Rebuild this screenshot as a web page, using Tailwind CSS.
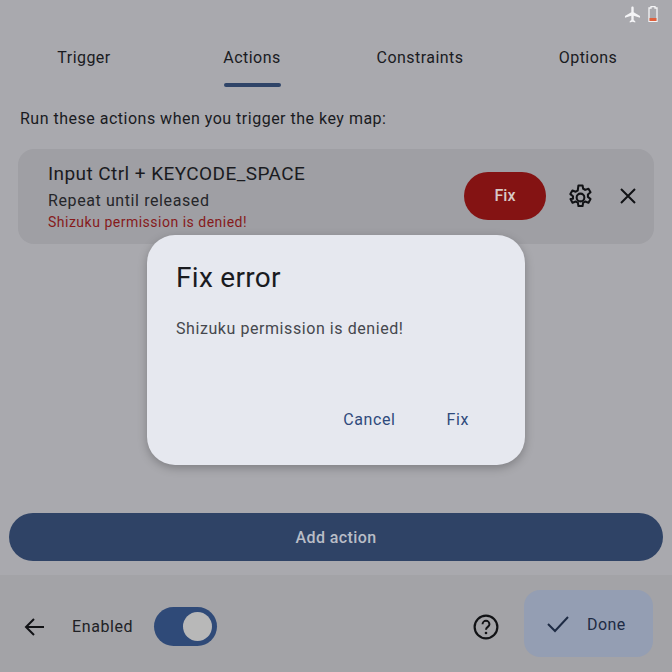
<!DOCTYPE html>
<html><head><meta charset="utf-8"><script src="https://cdn.jsdelivr.net/npm/@tailwindcss/browser@4"></script></head>
<body class="m-0">
<div class="relative w-[672px] h-[672px] overflow-hidden flex flex-col bg-[#a9a9ae] font-['Roboto',sans-serif] text-[#1a1b1f]">
  <div class="h-6 flex items-start justify-end gap-[6px] pt-[5px] pr-[14px] shrink-0">
    <svg class="w-[19px] h-[19px]" viewBox="0 0 24 24" fill="#f4f4f6"><path d="M21 16v-2l-8-5V3.500C13 2.670 12.330 2 11.500 2S10 2.670 10 3.500V9l-8 5v2l8-2.500V19l-2 1.500V22l3.500-1 3.500 1v-1.500L13 19v-5.500z" transform="translate(0.500 0)"/></svg>
    <svg class="w-[10px] h-[16px] mt-[1px]" viewBox="0 0 10 16"><path d="M3 .5h4v1.500h2v13.500H1V2h2z" fill="none" stroke="#f4f4f6" stroke-width="1.300"/><rect x="1.500" y="12" width="7" height="3" fill="#e0603c"/></svg>
  </div>
  <div class="h-[64px] flex shrink-0">
    <div class="flex-1 flex justify-center pt-[24px] text-[16px] leading-[20px] tracking-[0.45px]">Trigger</div>
    <div class="flex-1 flex flex-col items-center pt-[24px] text-[16px] leading-[20px] tracking-[0.45px]"><span>Actions</span><div class="w-[57px] h-[4px] mt-[15px] rounded-full bg-[#2f4468]"></div></div>
    <div class="flex-1 flex justify-center pt-[24px] text-[16px] leading-[20px] tracking-[0.45px]">Constraints</div>
    <div class="flex-1 flex justify-center pt-[24px] text-[16px] leading-[20px] tracking-[0.45px]">Options</div>
  </div>
  <p class="mt-[21px] ml-[20px] text-[16px] leading-[20px] tracking-[0.5px]">Run these actions when you trigger the key map:</p>
  <div class="mt-[20px] mx-[18px] h-[95px] rounded-[16px] bg-[#9f9fa4] flex items-center pl-[30px] pr-[14px] shrink-0">
    <div class="flex-1 flex flex-col">
      <div class="text-[19px] leading-[24px] tracking-[0.43px] -translate-y-[1px]">Input Ctrl + KEYCODE_SPACE</div>
      <div class="mt-[4px] text-[16px] leading-[20px] tracking-[0.6px] text-[#25262a]">Repeat until released</div>
      <div class="mt-[2px] text-[14px] leading-[18px] tracking-[0.5px] text-[#861a1b]">Shizuku permission is denied!</div>
    </div>
    <div class="w-[82px] h-[48px] -mt-[2px] rounded-[24px] bg-[#841313] text-[#d8c9c6] flex items-center justify-center text-[16px] font-medium">Fix</div>
    <svg class="w-[29px] h-[29px] ml-[20px] mt-[1px]" viewBox="0 0 24 24" fill="none" stroke="#111215" stroke-width="1.700" stroke-linejoin="round"><path d="M10.300 2h3.400l.5 2.800c.6.200 1.200.5 1.700.9l2.700-1 1.700 3-2.200 1.800c.1.700.1 1.300 0 2l2.200 1.800-1.700 3-2.700-1c-.5.400-1.100.7-1.700.9l-.5 2.800h-3.400l-.5-2.800c-.6-.2-1.200-.5-1.700-.9l-2.700 1-1.700-3L5.800 13c-.1-.7-.1-1.300 0-2L3.600 9.200l1.700-3 2.700 1c.5-.4 1.100-.7 1.700-.9z"/><circle cx="12" cy="12" r="3.200"/></svg>
    <svg class="w-[24px] h-[24px] ml-[21px] -mt-[2px]" viewBox="0 0 24 24" fill="none" stroke="#111215" stroke-width="2"><path d="M5 5l14 14M19 5L5 19"/></svg>
  </div>
  <div class="flex-1"></div>
  <div class="mx-[9px] h-[48px] rounded-full bg-[#2f4366] text-[#b9bdc6] flex items-center justify-center text-[16px] font-medium tracking-[0.4px] shrink-0 pt-[1px]">Add action</div>
  <div class="mt-[14px] h-[97px] bg-[#a3a3a7] flex items-center shrink-0 pt-[6px] pl-[22px] pr-[19px]">
    <svg class="w-[24px] h-[24px]" viewBox="0 0 24 24" fill="none" stroke="#111215" stroke-width="2"><path d="M22 12H4M12 4l-8 8 8 8"/></svg>
    <span class="ml-[26px] text-[16px] tracking-[0.6px] text-[#202125]">Enabled</span>
    <div class="ml-[21px] w-[63px] h-[39px] rounded-full bg-[#2f4a78] flex items-center justify-end pr-[5px]"><div class="w-[29px] h-[29px] rounded-full bg-[#b8b8b8]"></div></div>
    <div class="flex-1"></div>
    <svg class="w-[26px] h-[26px]" viewBox="0 0 24 24" fill="none" stroke="#111215" stroke-width="2"><circle cx="12" cy="12" r="10.500"/><path d="M8.800 9.500a3.200 3.200 0 0 1 6.400 0c0 2.300-3.200 2.500-3.200 5" stroke-width="1.800"/><circle cx="12" cy="17.500" r="1.200" fill="#111215" stroke="none"/></svg>
    <div class="ml-[25px] w-[129px] h-[67px] mb-[7px] rounded-[16px] bg-[#949eb3] flex items-center pl-[22px] text-[#1e2b44]">
      <svg class="w-[24px] h-[24px]" viewBox="0 0 24 24" fill="none" stroke="#1e2b44" stroke-width="2"><path d="M2 13l7 7L22 6"/></svg>
      <span class="ml-[17px] text-[16px] tracking-[0.45px] pt-[3px]">Done</span>
    </div>
  </div>
  <div class="absolute left-[147px] top-[235px] w-[378px] h-[230px] rounded-[28px] bg-[#e6e8ef] shadow-[0_3px_10px_rgba(0,0,0,0.25)] flex flex-col pl-[29px] pr-[56px]">
    <h2 class="mt-[25px] text-[28px] leading-[36px] font-normal tracking-[0.3px] text-[#1a1b1f]">Fix error</h2>
    <p class="mt-[23px] text-[16px] leading-[20px] tracking-[0.57px] text-[#45474d]">Shizuku permission is denied!</p>
    <div class="flex-1"></div>
    <div class="flex justify-end gap-[51px] mb-[35px] text-[16px] leading-[20px] tracking-[0.6px] text-[#2f4a7c]"><span>Cancel</span><span>Fix</span></div>
  </div>
</div>
</body></html>
